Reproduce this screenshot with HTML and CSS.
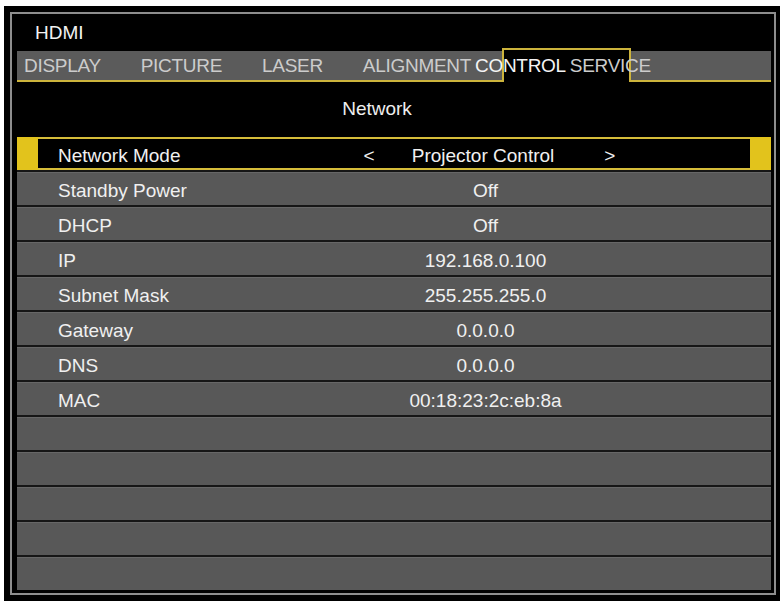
FILE: index.html
```html
<!DOCTYPE html>
<html>
<head>
    <title>Network</title>
    <link rel="stylesheet" href="styles.css">
</head>
<body>
    <div class="osd">
        <div class="panel">
            <div class="source">HDMI</div>

            <div class="tabs">
                <div class="tab-active"></div>
                <span class="tab">DISPLAY</span>
                <span class="tab">PICTURE</span>
                <span class="tab">LASER</span>
                <span class="tab tight">ALIGNMENT</span>
                <span class="tab tight current">CONTROL</span>
                <span class="tab tight">SERVICE</span>
            </div>

            <div class="title">Network</div>

            <div class="rows">
                <div class="row selected">
                    <span class="label">Network Mode</span>
                    <span class="value choice">
                        <span class="arrow prev">&lt;</span>Projector Control<span class="arrow next">&gt;</span>
                    </span>
                </div>
                <div class="row"><span class="label">Standby Power</span><span class="value">Off</span></div>
                <div class="row"><span class="label">DHCP</span><span class="value">Off</span></div>
                <div class="row"><span class="label">IP</span><span class="value">192.168.0.100</span></div>
                <div class="row"><span class="label">Subnet Mask</span><span class="value">255.255.255.0</span></div>
                <div class="row"><span class="label">Gateway</span><span class="value">0.0.0.0</span></div>
                <div class="row"><span class="label">DNS</span><span class="value">0.0.0.0</span></div>
                <div class="row"><span class="label">MAC</span><span class="value">00:18:23:2c:eb:8a</span></div>
                <div class="row"></div>
                <div class="row"></div>
                <div class="row"></div>
                <div class="row"></div>
                <div class="row"></div>
            </div>
        </div>
    </div>
</body>
</html>
```

FILE: styles.css
```css
body {
    margin: 0;
    background: #fff;
    font-family: "Liberation Sans", Arial, sans-serif;
    font-size: 19px;
    color: #eeeeee;
}
.osd {
    margin: 6px 0 0 4px;
    width: 776px;
    height: 595px;
    box-sizing: border-box;
    padding: 6px 4px 6px 6px;
    background: #000;
}
.panel {
    height: 100%;
    box-sizing: border-box;
    border: 2px solid #8e8e8e;
    padding: 0 3px 2px 5px;
    display: flex;
    flex-direction: column;
}
.source {
    height: 37px;
    line-height: 37px;
    padding-left: 18px;
    color: #f2f2f2;
}

/* menu tabs */
.tabs {
    position: relative;
    height: 29px;
    line-height: 30px;
    padding-left: 7px;
    background: #5b5b5b;
    border-bottom: 2px solid #cdb43c;
    display: flex;
    white-space: nowrap;
    letter-spacing: -0.3px;
}
.tab {
    position: relative;
    margin-right: 40px;
    color: #cccccc;
}
.tab.tight {
    margin-right: 4px;
}
.tab.current {
    color: #f4f4f4;
}
.tab-active {
    position: absolute;
    left: 485px;
    top: -3px;
    width: 129px;
    height: 34px;
    box-sizing: border-box;
    border: 2px solid #cdb43c;
    border-bottom: none;
    background: #000;
}

.title {
    height: 53px;
    line-height: 53px;
    text-align: center;
    padding-right: 34px;
    color: #eeeeee;
}

/* settings list */
.rows {
    display: flex;
    flex-direction: column;
}
.row {
    height: 35px;
    box-sizing: border-box;
    border-top: 2px solid #161616;
    padding-top: 2px;
    background: #585858;
    box-shadow: inset 0 1px 0 #676767;
    line-height: 33px;
    display: flex;
}
.row.selected {
    border-top-color: #000;
    background: #000;
    box-shadow: inset 21px 0 0 #e2c31c, inset -21px 0 0 #e2c31c,
                inset 0 2px 0 #d6bd3a, inset 0 -2px 0 #d6bd3a;
}
.label {
    width: 183px;
    box-sizing: border-box;
    padding-left: 41px;
    color: #f0f0f0;
}
.value {
    flex: 1;
    text-align: center;
    color: #f0f0f0;
}
.choice {
    padding-left: 8px;
}
.arrow.prev {
    margin-right: 37px;
}
.arrow.next {
    margin-left: 50px;
}
```
